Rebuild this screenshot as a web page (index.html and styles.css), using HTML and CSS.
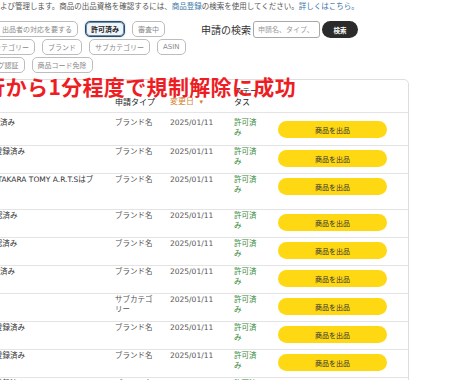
FILE: index.html
```html
<!DOCTYPE html>
<html lang="ja">
<head>
    <meta charset="UTF-8">
    <meta name="viewport" content="width=device-width, initial-scale=1.0">
    <title>出品申請</title>
    <link rel="stylesheet" href="styles.css">
</head>
<body>
    <div class="page">
        <p class="intro">申請を表示および管理します。商品の出品資格を確認するには、<a href="#">商品登録</a>の検索を使用してください。<a href="#">詳しくはこちら。</a></p>

        <div class="toolbar">
            <div class="filters">
                <div class="chip-row row-status">
                    <span class="chip">出品者の対応を要する</span>
                    <span class="chip active">許可済み</span>
                    <span class="chip">審査中</span>
                </div>
                <div class="chip-row row-type">
                    <span class="chip">カテゴリー</span>
                    <span class="chip">ブランド</span>
                    <span class="chip">サブカテゴリー</span>
                    <span class="chip">ASIN</span>
                </div>
                <div class="chip-row row-more">
                    <span class="chip">リスティング認証</span>
                    <span class="chip">商品コード免除</span>
                </div>
            </div>
            <div class="search">
                <span class="search-label">申請の検索</span>
                <input class="search-input" type="text" placeholder="申請名、タイプ、ステータス">
                <button class="search-btn">検索</button>
            </div>
        </div>

        <div class="card">
            <div class="note">実行から1分程度で規制解除に成功</div>

            <div class="row head">
                <div class="cell">申請名</div>
                <div class="cell">申請タイプ</div>
                <div class="cell sort">変更日 <span class="caret">▾</span></div>
                <div class="cell">ステータス</div>
                <div class="cell"></div>
            </div>

            <div class="row first">
                <div class="cell name">ASIN 承認済み</div>
                <div class="cell type">ブランド名</div>
                <div class="cell date">2025/01/11</div>
                <div class="cell status">許可済み</div>
                <div class="cell action"><button class="list-btn">商品を出品</button></div>
            </div>
            <div class="row">
                <div class="cell name">ブランド登録済み</div>
                <div class="cell type">ブランド名</div>
                <div class="cell date">2025/01/11</div>
                <div class="cell status">許可済み</div>
                <div class="cell action"><button class="list-btn">商品を出品</button></div>
            </div>
            <div class="row tall">
                <div class="cell name">ブランド TAKARA TOMY A.R.T.Sはブランド</div>
                <div class="cell type">ブランド名</div>
                <div class="cell date">2025/01/11</div>
                <div class="cell status">許可済み</div>
                <div class="cell action"><button class="list-btn">商品を出品</button></div>
            </div>
            <div class="row">
                <div class="cell name">ホビー承認済み</div>
                <div class="cell type">ブランド名</div>
                <div class="cell date">2025/01/11</div>
                <div class="cell status">許可済み</div>
                <div class="cell action"><button class="list-btn">商品を出品</button></div>
            </div>
            <div class="row">
                <div class="cell name">ゲーム承認済み</div>
                <div class="cell type">ブランド名</div>
                <div class="cell date">2025/01/11</div>
                <div class="cell status">許可済み</div>
                <div class="cell action"><button class="list-btn">商品を出品</button></div>
            </div>
            <div class="row">
                <div class="cell name">ASIN 承認済み</div>
                <div class="cell type">ブランド名</div>
                <div class="cell date">2025/01/11</div>
                <div class="cell status">許可済み</div>
                <div class="cell action"><button class="list-btn">商品を出品</button></div>
            </div>
            <div class="row">
                <div class="cell name">JAN</div>
                <div class="cell type">サブカテゴリー</div>
                <div class="cell date">2025/01/11</div>
                <div class="cell status">許可済み</div>
                <div class="cell action"><button class="list-btn">商品を出品</button></div>
            </div>
            <div class="row">
                <div class="cell name">ブランド登録済み</div>
                <div class="cell type">ブランド名</div>
                <div class="cell date">2025/01/11</div>
                <div class="cell status">許可済み</div>
                <div class="cell action"><button class="list-btn">商品を出品</button></div>
            </div>
            <div class="row">
                <div class="cell name">ブランド登録済み</div>
                <div class="cell type">ブランド名</div>
                <div class="cell date">2025/01/11</div>
                <div class="cell status">許可済み</div>
                <div class="cell action"><button class="list-btn">商品を出品</button></div>
            </div>
            <div class="row">
                <div class="cell name">ブランド登録済み</div>
                <div class="cell type">ブランド名</div>
                <div class="cell date">2025/01/11</div>
                <div class="cell status">許可済み</div>
                <div class="cell action"><button class="list-btn">商品を出品</button></div>
            </div>
        </div>
    </div>
</body>
</html>
```

FILE: styles.css
```css
html, body {
    overflow: hidden;
}
body {
    margin: 0;
    background: #fff;
    font-family: "DejaVu Sans", "Noto Sans CJK JP", sans-serif;
    color: #333;
}

.intro {
    margin: 0 0 7px -45px;
    font-size: 7.5px;
    line-height: 14px;
    color: #555;
    white-space: nowrap;
}
.intro a {
    color: #3b77a8;
    text-decoration: none;
}

/* Filters + search */
.toolbar {
    display: flex;
    align-items: flex-start;
    gap: 4px;
}
.filters {
    width: 197px;
    display: flex;
    flex-direction: column;
    gap: 2px;
}
.chip-row {
    display: flex;
    gap: 7px;
}
.row-status { margin-left: -4px; }
.row-type { margin-left: -12px; }
.row-more { margin-left: -43px; }

.chip {
    display: inline-flex;
    align-items: center;
    box-sizing: border-box;
    height: 16px;
    padding: 0 5px;
    border: 1px solid #bdbdbd;
    border-radius: 5px;
    font-size: 7px;
    color: #8a8a8a;
    white-space: nowrap;
}
.chip.active {
    border-color: #2f4b63;
    background: #eef5fa;
    box-shadow: inset 0 0 0 1px #6f8ca5, 0 0 2px #9fc3de;
    color: #222;
    font-weight: bold;
}

.search {
    display: flex;
    align-items: center;
    height: 17px;
}
.search-label {
    font-size: 10px;
    color: #333;
    margin-right: 2px;
    white-space: nowrap;
}
.search-input {
    box-sizing: border-box;
    width: 67px;
    height: 17px;
    margin: 0 2px 0 0;
    padding: 0 4px;
    border: 1px solid #a8a8a8;
    border-radius: 3px;
    font-family: "DejaVu Sans", "Noto Sans CJK JP", sans-serif;
    font-size: 7px;
}
.search-input::placeholder {
    color: #9a9a9a;
}
.search-btn {
    width: 36px;
    height: 17px;
    padding: 0;
    border: 0;
    border-radius: 9px;
    background: #2b2b2b;
    color: #fff;
    font-family: "Noto Sans CJK JP", sans-serif;
    font-size: 6.5px;
    font-weight: bold;
}

/* Applications table */
.card {
    position: relative;
    box-sizing: border-box;
    width: 451px;
    margin: 6px 0 0 -42px;
    border: 1px solid #dedede;
    border-radius: 5px;
    background: #fff;
}
.note {
    position: absolute;
    left: 4px;
    top: -4px;
    font-family: "Noto Sans CJK JP", sans-serif;
    font-size: 21px;
    line-height: 21px;
    font-weight: bold;
    letter-spacing: 0.35px;
    color: #ee1d23;
    white-space: nowrap;
}

.row {
    display: grid;
    grid-template-columns: 150px 55px 64px 38px 1fr;
    align-items: start;
    padding: 1px 0 6px;
    border-bottom: 1px solid #e4e4e4;
}
.row.head {
    align-items: end;
    padding: 6px 0 4px;
}
.row.first {
    padding: 5px 0 7px;
}
.row.tall {
    padding-bottom: 14px;
}

.cell {
    padding: 0 6px;
    font-size: 7.5px;
    line-height: 10px;
}
.head .cell {
    font-size: 8px;
    line-height: 11px;
    color: #222;
}
.head .sort {
    color: #d4822f;
}
.caret {
    font-size: 7px;
    margin-left: 3px;
}

.cell.name {
    padding-right: 10px;
    color: #333;
}
.cell.type,
.cell.date {
    color: #555;
}
.cell.status {
    color: #37893b;
}
.cell.action {
    padding-left: 12px;
}
.list-btn {
    display: block;
    width: 109px;
    height: 17px;
    margin-top: 3px;
    padding: 0;
    border: 0;
    border-radius: 9px;
    background: #ffd814;
    color: #333;
    font-family: "Noto Sans CJK JP", sans-serif;
    font-size: 7px;
}
```
